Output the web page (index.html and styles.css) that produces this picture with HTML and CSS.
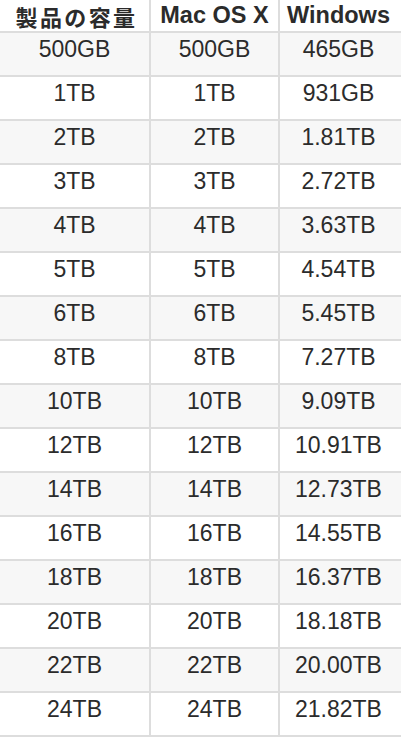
FILE: index.html
```html
<!DOCTYPE html>
<html lang="ja">
<head>
<meta charset="utf-8">
<link rel="stylesheet" href="styles.css">
</head>
<body>
<table class="cap-table">
  <thead>
    <tr>
      <th class="c1">製品の容量</th>
      <th class="c2">Mac OS X</th>
      <th class="c3">Windows</th>
    </tr>
  </thead>
  <tbody>
    <tr><td class="c1">500GB</td><td class="c2">500GB</td><td class="c3">465GB</td></tr>
    <tr><td class="c1">1TB</td><td class="c2">1TB</td><td class="c3">931GB</td></tr>
    <tr><td class="c1">2TB</td><td class="c2">2TB</td><td class="c3">1.81TB</td></tr>
    <tr><td class="c1">3TB</td><td class="c2">3TB</td><td class="c3">2.72TB</td></tr>
    <tr><td class="c1">4TB</td><td class="c2">4TB</td><td class="c3">3.63TB</td></tr>
    <tr><td class="c1">5TB</td><td class="c2">5TB</td><td class="c3">4.54TB</td></tr>
    <tr><td class="c1">6TB</td><td class="c2">6TB</td><td class="c3">5.45TB</td></tr>
    <tr><td class="c1">8TB</td><td class="c2">8TB</td><td class="c3">7.27TB</td></tr>
    <tr><td class="c1">10TB</td><td class="c2">10TB</td><td class="c3">9.09TB</td></tr>
    <tr><td class="c1">12TB</td><td class="c2">12TB</td><td class="c3">10.91TB</td></tr>
    <tr><td class="c1">14TB</td><td class="c2">14TB</td><td class="c3">12.73TB</td></tr>
    <tr><td class="c1">16TB</td><td class="c2">16TB</td><td class="c3">14.55TB</td></tr>
    <tr><td class="c1">18TB</td><td class="c2">18TB</td><td class="c3">16.37TB</td></tr>
    <tr><td class="c1">20TB</td><td class="c2">20TB</td><td class="c3">18.18TB</td></tr>
    <tr><td class="c1">22TB</td><td class="c2">22TB</td><td class="c3">20.00TB</td></tr>
    <tr><td class="c1">24TB</td><td class="c2">24TB</td><td class="c3">21.82TB</td></tr>
  </tbody>
</table>
</body>
</html>
```
FILE: styles.css
```css
html, body {
  margin: 0;
  padding: 0;
  background: #ffffff;
  overflow: hidden;
}

.cap-table {
  border-collapse: separate;
  border-spacing: 0;
  table-layout: fixed;
  width: 401px;
  font-family: "Liberation Sans", Arial, "Noto Sans CJK JP", sans-serif;
  color: #2b2b2b;
}

.cap-table th,
.cap-table td {
  box-sizing: border-box;
  text-align: center;
  border-bottom: 2px solid #dddddd;
  border-right: 2px solid #dddddd;
  white-space: nowrap;
}

.cap-table .c1 { width: 151px; }
.cap-table .c2 { width: 129px; }
.cap-table .c3 { width: 121px; border-right: none; padding-right: 4px; }

.cap-table th {
  font-size: 23.5px;
  font-weight: bold;
  line-height: 31px;
  height: 33px;
  padding: 0;
  background: #ffffff;
}

.cap-table th.c1 {
  font-family: "Noto Sans CJK JP", sans-serif;
  font-size: 22px;
  letter-spacing: 2.4px;
  line-height: 30px;
  padding: 1px 0 0 4px;
}

.cap-table td {
  font-size: 23px;
  line-height: 30px;
  height: 44px;
  padding: 1px 0 11px 0;
  vertical-align: top;
}

.cap-table tbody tr:nth-child(odd) td {
  background: #f7f7f7;
}
```
